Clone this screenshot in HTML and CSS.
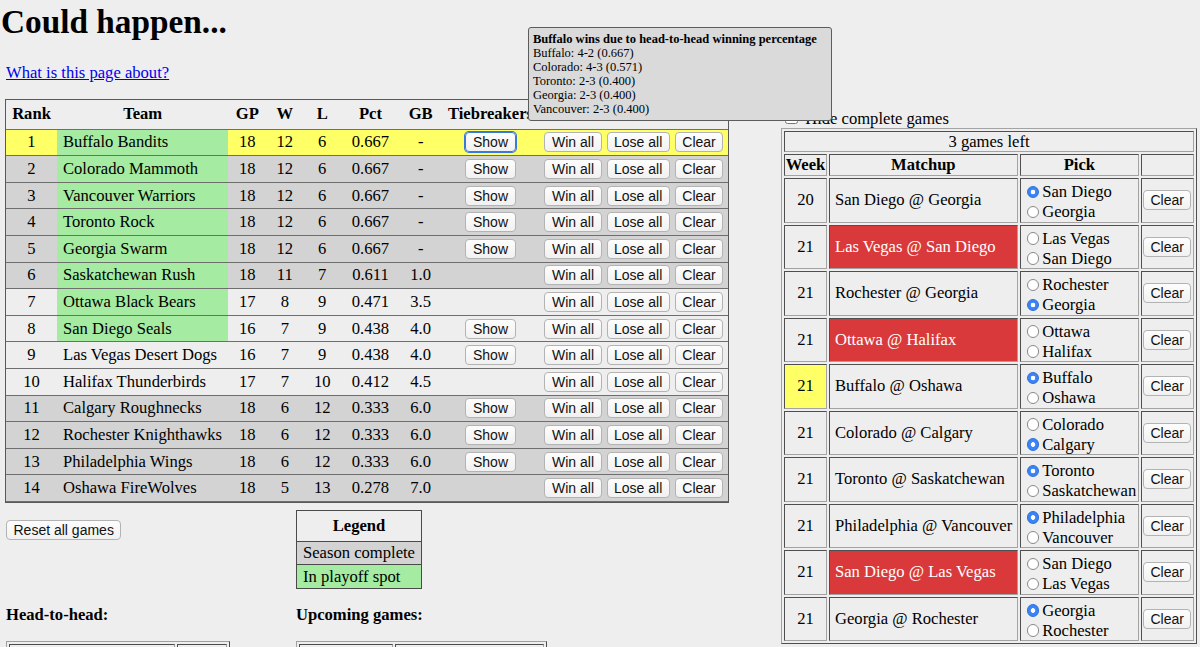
FILE: index.html
```html
<!DOCTYPE html>
<html lang="en">
<head>
<meta charset="utf-8">
<title>Could happen...</title>
<link rel="stylesheet" href="styles.css">
</head>
<body>
<div class="page">
  <div class="main">
    <h1 class="title">Could happen...</h1>
    <p class="about"><a href="#">What is this page about?</a></p>
    <table class="standings">
      <colgroup>
        <col class="c-rank"><col class="c-team"><col class="c-gp"><col class="c-w"><col class="c-l"><col class="c-pct"><col class="c-gb"><col class="c-tie"><col class="c-act">
      </colgroup>
      <thead>
        <tr><th>Rank</th><th>Team</th><th>GP</th><th>W</th><th>L</th><th>Pct</th><th>GB</th><th>Tiebreakers</th><th></th></tr>
      </thead>
      <tbody>
        <tr class="me"><td>1</td><td class="team in">Buffalo Bandits</td><td>18</td><td>12</td><td>6</td><td>0.667</td><td>-</td><td><button class="btn focus">Show</button></td><td><div class="acts"><button class="btn">Win all</button><button class="btn">Lose all</button><button class="btn">Clear</button></div></td></tr>
        <tr class="done"><td>2</td><td class="team in">Colorado Mammoth</td><td>18</td><td>12</td><td>6</td><td>0.667</td><td>-</td><td><button class="btn">Show</button></td><td><div class="acts"><button class="btn">Win all</button><button class="btn">Lose all</button><button class="btn">Clear</button></div></td></tr>
        <tr class="done"><td>3</td><td class="team in">Vancouver Warriors</td><td>18</td><td>12</td><td>6</td><td>0.667</td><td>-</td><td><button class="btn">Show</button></td><td><div class="acts"><button class="btn">Win all</button><button class="btn">Lose all</button><button class="btn">Clear</button></div></td></tr>
        <tr class="done"><td>4</td><td class="team in">Toronto Rock</td><td>18</td><td>12</td><td>6</td><td>0.667</td><td>-</td><td><button class="btn">Show</button></td><td><div class="acts"><button class="btn">Win all</button><button class="btn">Lose all</button><button class="btn">Clear</button></div></td></tr>
        <tr class="done"><td>5</td><td class="team in">Georgia Swarm</td><td>18</td><td>12</td><td>6</td><td>0.667</td><td>-</td><td><button class="btn">Show</button></td><td><div class="acts"><button class="btn">Win all</button><button class="btn">Lose all</button><button class="btn">Clear</button></div></td></tr>
        <tr class="done"><td>6</td><td class="team in">Saskatchewan Rush</td><td>18</td><td>11</td><td>7</td><td>0.611</td><td>1.0</td><td></td><td><div class="acts"><button class="btn">Win all</button><button class="btn">Lose all</button><button class="btn">Clear</button></div></td></tr>
        <tr><td>7</td><td class="team in">Ottawa Black Bears</td><td>17</td><td>8</td><td>9</td><td>0.471</td><td>3.5</td><td></td><td><div class="acts"><button class="btn">Win all</button><button class="btn">Lose all</button><button class="btn">Clear</button></div></td></tr>
        <tr><td>8</td><td class="team in">San Diego Seals</td><td>16</td><td>7</td><td>9</td><td>0.438</td><td>4.0</td><td><button class="btn">Show</button></td><td><div class="acts"><button class="btn">Win all</button><button class="btn">Lose all</button><button class="btn">Clear</button></div></td></tr>
        <tr><td>9</td><td class="team">Las Vegas Desert Dogs</td><td>16</td><td>7</td><td>9</td><td>0.438</td><td>4.0</td><td><button class="btn">Show</button></td><td><div class="acts"><button class="btn">Win all</button><button class="btn">Lose all</button><button class="btn">Clear</button></div></td></tr>
        <tr><td>10</td><td class="team">Halifax Thunderbirds</td><td>17</td><td>7</td><td>10</td><td>0.412</td><td>4.5</td><td></td><td><div class="acts"><button class="btn">Win all</button><button class="btn">Lose all</button><button class="btn">Clear</button></div></td></tr>
        <tr class="done"><td>11</td><td class="team">Calgary Roughnecks</td><td>18</td><td>6</td><td>12</td><td>0.333</td><td>6.0</td><td><button class="btn">Show</button></td><td><div class="acts"><button class="btn">Win all</button><button class="btn">Lose all</button><button class="btn">Clear</button></div></td></tr>
        <tr class="done"><td>12</td><td class="team">Rochester Knighthawks</td><td>18</td><td>6</td><td>12</td><td>0.333</td><td>6.0</td><td><button class="btn">Show</button></td><td><div class="acts"><button class="btn">Win all</button><button class="btn">Lose all</button><button class="btn">Clear</button></div></td></tr>
        <tr class="done"><td>13</td><td class="team">Philadelphia Wings</td><td>18</td><td>6</td><td>12</td><td>0.333</td><td>6.0</td><td><button class="btn">Show</button></td><td><div class="acts"><button class="btn">Win all</button><button class="btn">Lose all</button><button class="btn">Clear</button></div></td></tr>
        <tr class="done"><td>14</td><td class="team">Oshawa FireWolves</td><td>18</td><td>5</td><td>13</td><td>0.278</td><td>7.0</td><td></td><td><div class="acts"><button class="btn">Win all</button><button class="btn">Lose all</button><button class="btn">Clear</button></div></td></tr>
      </tbody>
    </table>

    <div class="below">
      <div class="reset-wrap"><button class="btn">Reset all games</button></div>
      <table class="legend">
        <tr><th>Legend</th></tr>
        <tr><td class="l-done">Season complete</td></tr>
        <tr><td class="l-in">In playoff spot</td></tr>
      </table>
      <h3 class="sub">Head-to-head:</h3>
      <h3 class="sub">Upcoming games:</h3>
      <table class="grid h2h">
        <tr><th class="h2h-a">&nbsp;</th><th>&nbsp;</th></tr>
      </table>
      <table class="grid upcoming">
        <tr><th class="up-a">&nbsp;</th><th>&nbsp;</th></tr>
      </table>
    </div>
  </div>

  <div class="side">
    <label class="hide"><input type="checkbox"> Hide complete games</label>
    <table class="games">
      <colgroup><col class="g-week"><col class="g-match"><col class="g-pick"><col class="g-clear"></colgroup>
      <tr class="gh"><td colspan="4">3 games left</td></tr>
      <tr class="gh"><th class="wk">Week</th><th>Matchup</th><th>Pick</th><th></th></tr>
      <tr class="gr"><td>20</td><td class="m">San Diego @ Georgia</td><td class="pick"><label><input type="radio" name="g1" checked>San Diego</label><label><input type="radio" name="g1">Georgia</label></td><td class="clr"><button class="btn">Clear</button></td></tr>
      <tr class="gr"><td>21</td><td class="m red">Las Vegas @ San Diego</td><td class="pick"><label><input type="radio" name="g2">Las Vegas</label><label><input type="radio" name="g2">San Diego</label></td><td class="clr"><button class="btn">Clear</button></td></tr>
      <tr class="gr"><td>21</td><td class="m">Rochester @ Georgia</td><td class="pick"><label><input type="radio" name="g3">Rochester</label><label><input type="radio" name="g3" checked>Georgia</label></td><td class="clr"><button class="btn">Clear</button></td></tr>
      <tr class="gr"><td>21</td><td class="m red">Ottawa @ Halifax</td><td class="pick"><label><input type="radio" name="g4">Ottawa</label><label><input type="radio" name="g4">Halifax</label></td><td class="clr"><button class="btn">Clear</button></td></tr>
      <tr class="gr"><td class="yel">21</td><td class="m">Buffalo @ Oshawa</td><td class="pick"><label><input type="radio" name="g5" checked>Buffalo</label><label><input type="radio" name="g5">Oshawa</label></td><td class="clr"><button class="btn">Clear</button></td></tr>
      <tr class="gr"><td>21</td><td class="m">Colorado @ Calgary</td><td class="pick"><label><input type="radio" name="g6">Colorado</label><label><input type="radio" name="g6" checked>Calgary</label></td><td class="clr"><button class="btn">Clear</button></td></tr>
      <tr class="gr"><td>21</td><td class="m">Toronto @ Saskatchewan</td><td class="pick"><label><input type="radio" name="g7" checked>Toronto</label><label><input type="radio" name="g7">Saskatchewan</label></td><td class="clr"><button class="btn">Clear</button></td></tr>
      <tr class="gr"><td>21</td><td class="m">Philadelphia @ Vancouver</td><td class="pick"><label><input type="radio" name="g8" checked>Philadelphia</label><label><input type="radio" name="g8">Vancouver</label></td><td class="clr"><button class="btn">Clear</button></td></tr>
      <tr class="gr"><td>21</td><td class="m red">San Diego @ Las Vegas</td><td class="pick"><label><input type="radio" name="g9">San Diego</label><label><input type="radio" name="g9">Las Vegas</label></td><td class="clr"><button class="btn">Clear</button></td></tr>
      <tr class="gr"><td>21</td><td class="m">Georgia @ Rochester</td><td class="pick"><label><input type="radio" name="g10" checked>Georgia</label><label><input type="radio" name="g10">Rochester</label></td><td class="clr"><button class="btn">Clear</button></td></tr>
    </table>
  </div>
</div>

<div class="tip">
  <div class="tip-title">Buffalo wins due to head-to-head winning percentage</div>
  <div>Buffalo: 4-2 (0.667)</div>
  <div>Colorado: 4-3 (0.571)</div>
  <div>Toronto: 2-3 (0.400)</div>
  <div>Georgia: 2-3 (0.400)</div>
  <div>Vancouver: 2-3 (0.400)</div>
</div>
</body>
</html>
```

FILE: styles.css
```css
html {
  background: #eeeeee;
}

body {
  margin: 0;
  padding: 0 3px 0 5px;
  height: 647px;
  overflow: hidden;
  background: #eeeeee;
  color: #000;
  font-family: "Liberation Serif", "Times New Roman", serif;
  font-size: 16.6px;
}

.page {
  display: flex;
  align-items: flex-start;
}

.main {
  width: 724px;
  flex: none;
}

.side {
  margin-left: auto;
  margin-top: 108px;
  width: 416px;
  flex: none;
}

.title {
  font-size: 33.3px;
  font-weight: bold;
  margin: 3px 0 22px -4px;
}

.about {
  margin: 0 0 15.7px 1px;
}

.about a {
  color: #0000ee;
}

/* ---------- buttons ---------- */
.btn {
  font-family: "Liberation Sans", Arial, sans-serif;
  font-size: 14px;
  line-height: 16px;
  height: 20px;
  box-sizing: border-box;
  padding: 1px 6.5px;
  border: 1px solid #b3b3b3;
  border-radius: 4px;
  background: linear-gradient(#fdfdfd, #f1f1f1);
  color: #111;
  margin: 0;
  white-space: nowrap;
}

.btn.focus {
  border-color: #3b78dc;
  box-shadow: 0 0 0 1px #3b78dc;
}

/* ---------- standings ---------- */
.standings {
  table-layout: fixed;
  width: 724px;
  border-collapse: separate;
  border-spacing: 0;
  border: 1px solid #585858;
}

.c-rank { width: 51px; }
.c-team { width: 171.3px; }
.c-gp { width: 38px; }
.c-w { width: 37px; }
.c-l { width: 37.8px; }
.c-pct { width: 58.8px; }
.c-gb { width: 41.6px; }
.c-tie { width: 98px; }
.c-act { width: 188.5px; }

.standings th,
.standings td {
  padding: 0 5px;
  text-align: center;
  border-bottom: 1px solid #6e6e6e;
  white-space: nowrap;
}

.standings thead tr {
  height: 30px;
}

.standings tbody tr {
  height: 26.6px;
}

.standings td.team {
  text-align: left;
  padding-left: 6px;
}

.standings tr.done td {
  background: #d3d3d3;
}

.standings tr.me td {
  background: #ffff66;
}

.standings td.in,
.standings tr.done td.in,
.standings tr.me td.in {
  background: #a5eba1;
}

.acts {
  display: flex;
  gap: 5px;
}

/* ---------- below the standings ---------- */
.below {
  display: grid;
  grid-template-columns: 290px auto;
  align-items: start;
  margin-top: 7px;
}

.reset-wrap {
  padding-top: 10px;
  padding-left: 1px;
}

.legend {
  border-collapse: collapse;
  border: 1px solid #4a4a4a;
  justify-self: start;
  margin-left: 1px;
}

.legend th,
.legend td {
  border: 1px solid #4a4a4a;
  padding: 0 6px;
  text-align: left;
}

.legend th {
  text-align: center;
  height: 29.7px;
}

.legend td {
  height: 22.7px;
}

.legend .l-done {
  background: #d3d3d3;
}

.legend .l-in {
  background: #a5eba1;
}

.sub {
  font-size: 16.6px;
  font-weight: bold;
  margin: 16.3px 0 16px 1px;
}

.grid {
  border: 1px outset #a0a0a0;
  border-spacing: 2px;
  margin-left: 1px;
}

.grid th,
.grid td {
  border: 1px inset #a0a0a0;
  padding: 1px 4px;
}

.h2h {
  width: 224px;
}

.h2h-a {
  width: 156px;
}

.upcoming {
  width: 251px;
}

.up-a {
  width: 84px;
}

/* ---------- right side ---------- */
.hide {
  display: block;
  height: 19.5px;
  white-space: nowrap;
}

.hide input {
  margin: 3px 3px 3px 4px;
}

.games {
  table-layout: fixed;
  width: 416px;
  border-collapse: separate;
  border-spacing: 2px;
  border: 1px outset #a3a3a3;
}

.g-week { width: 43px; }
.g-match { width: 188.7px; }
.g-pick { width: 119.3px; }
.g-clear { width: 53px; }

.games th,
.games td {
  border: 1px inset #a3a3a3;
  padding: 1px;
  text-align: center;
  white-space: nowrap;
  box-sizing: border-box;
}

.games tr.gh th,
.games tr.gh td {
  line-height: 17.8px;
}

.games th.wk {
  padding: 0;
}

.games tr.gh {
  height: 21.8px;
}

.games tr.gr {
  height: 44.5px;
}

.games td.m {
  text-align: left;
  padding-left: 5px;
}

.games td.red {
  background: #d9393a;
  color: #fff;
}

.games td.yel {
  background: #ffff66;
}

.games td.pick {
  text-align: left;
  padding: 2px 1px 0 1px;
}

.games td.clr {
  text-align: left;
}

.pick label {
  display: block;
  height: 20.25px;
  line-height: 22.4px;
}

.pick input {
  -webkit-appearance: none;
  appearance: none;
  box-sizing: border-box;
  width: 12.5px;
  height: 12.5px;
  margin: 0 3px 0 5px;
  border: 1px solid #8a8a8a;
  border-radius: 50%;
  background: #fff;
  vertical-align: -1px;
}

.pick input:checked {
  border-color: #2f6fd8;
  background: radial-gradient(circle, #ffffff 0 2px, #3b84f6 2.6px);
}

/* ---------- tooltip ---------- */
.tip {
  position: absolute;
  left: 527.5px;
  top: 26.7px;
  width: 304.5px;
  height: 94px;
  box-sizing: border-box;
  padding: 4.3px 4px 3px 4.4px;
  background: #dadada;
  border: 1px solid #5c5c5c;
  border-radius: 3px;
  font-size: 12.5px;
  line-height: 14.1px;
  z-index: 10;
  white-space: nowrap;
}

.tip-title {
  font-weight: bold;
}
```
